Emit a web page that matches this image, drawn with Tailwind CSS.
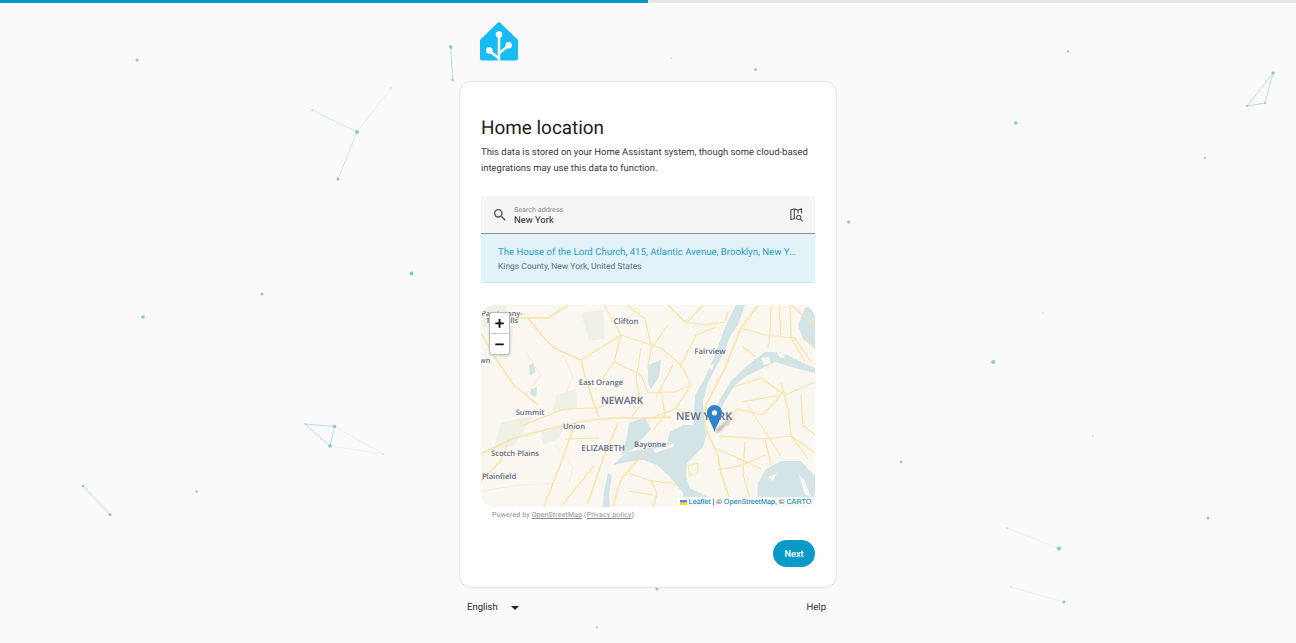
<!DOCTYPE html>
<html lang="en">
<head>
  <meta charset="UTF-8">
  <meta name="viewport" content="width=device-width, initial-scale=1.0">
  <title>Home location</title>
  <script src="https://cdn.jsdelivr.net/npm/@tailwindcss/browser@4"></script>
</head>
<body class="bg-[#fafafa] font-['Roboto',sans-serif] text-[#212121] overflow-hidden [text-rendering:geometricPrecision]">
  <div class="relative h-[643px] w-[1296px] overflow-hidden">

    <!-- background particles -->
    <svg class="absolute inset-0" width="1296" height="643" viewBox="0 0 1296 643">
      <g class="stroke-[#7fc4d4]" stroke-width="0.7" fill="none">
        <path opacity=".55" d="M312 110L357 132"/>
        <path opacity=".25" d="M357 132L391 88"/>
        <path opacity=".5" d="M357 132L338 179"/>
        <path opacity=".8" d="M305 424L334.5 426.5M305 424L330 446M334.5 426.5L330 446"/>
        <path opacity=".2" d="M334.5 426.5L383 454M330 446L383 454"/>
        <path opacity=".8" d="M83 486L110 514.5"/>
        <path opacity=".8" d="M450.7 47L452.7 80"/>
        <path opacity=".8" d="M1273 73L1247 106L1265 103Z"/>
        <path opacity=".2" d="M1007 528L1059 548.5M1011 587L1064 602"/>
      </g>
      <g class="fill-[#86c6d6]">
        <circle cx="137" cy="60" r="1.5"/><circle cx="357" cy="132" r="2"/><circle cx="312" cy="110" r=".7"/>
        <circle cx="391" cy="88" r=".6"/><circle cx="338" cy="179" r="1.6"/><circle cx="411.5" cy="273.5" r="2"/>
        <circle cx="262" cy="294" r="1.5"/><circle cx="143" cy="317" r="1.8"/><circle cx="305" cy="424" r=".7"/>
        <circle cx="334.5" cy="426.5" r="1.7"/><circle cx="330" cy="446" r="1.7"/><circle cx="383" cy="454" r=".6"/>
        <circle cx="83" cy="486" r="1.2"/><circle cx="110" cy="514.5" r="1.6"/><circle cx="196.5" cy="491.5" r="1.2"/>
        <circle cx="450.7" cy="47" r="1.8"/><circle cx="452.7" cy="80" r="1.2"/><circle cx="671" cy="58" r=".6"/>
        <circle cx="755.5" cy="69.7" r="1.4"/><circle cx="1068" cy="51.4" r="1.1"/><circle cx="1273" cy="73" r="1.6"/>
        <circle cx="1247" cy="106" r="1"/><circle cx="1265" cy="103" r="1"/><circle cx="1015.7" cy="123" r="1.8"/>
        <circle cx="1205" cy="158" r="1.1"/><circle cx="848.7" cy="222" r="1.5"/><circle cx="1043" cy="313" r=".6"/>
        <circle cx="993.3" cy="362" r="2.1"/><circle cx="1093" cy="436" r=".7"/><circle cx="901" cy="462" r="1.2"/>
        <circle cx="1208" cy="518" r="1.5"/><circle cx="1007" cy="528" r=".6"/><circle cx="1059" cy="548.5" r="2"/>
        <circle cx="1011" cy="587" r=".6"/><circle cx="1064" cy="602" r="1.5"/><circle cx="657" cy="589" r="1.5"/>
        <circle cx="597" cy="627.5" r=".9"/>
      </g>
    </svg>

    <!-- progress -->
    <div class="relative h-[3px] bg-[#e6e6e6]">
      <div class="h-full w-1/2 bg-[#0a97c6]"></div>
    </div>

    <div class="relative mx-auto w-[378px]">
      <!-- logo -->
      <svg class="ml-[20px] mt-[19px] block" width="40" height="39" viewBox="0 0 40 39">
        <path fill="#18bcf2" d="M19 0.5a1.4 1.4 0 0 1 1.9 0L38.6 17.4a1.6 1.6 0 0 1 .4 1.1V36.600a2 2 0 0 1-2 2H3a2 2 0 0 1-2-2V18.500a1.6 1.6 0 0 1 .4-1.100Z"/>
        <g stroke="#fff" stroke-width="2.500" fill="none" stroke-linecap="butt">
          <path d="M20 13V38.600"/>
          <path d="M29.500 24L20 31"/>
          <path d="M10.500 29L20 36.500"/>
        </g>
        <g fill="#fff">
          <circle cx="20" cy="12.500" r="3.200"/>
          <circle cx="29.700" cy="23.300" r="3.200"/>
          <circle cx="10.300" cy="28.500" r="3.200"/>
        </g>
      </svg>

      <!-- card -->
      <div class="mt-[20px] rounded-xl border border-[#e2e2e2] bg-white px-[21px] pt-[34px] pb-[20px]">
        <h1 class="text-[18.9px] leading-[24px] font-normal text-[#1c1c1c]">Home location</h1>
        <p class="mt-[5px] text-[9.45px] leading-[15.5px] text-[#3a3a3a]">This data is stored on your Home Assistant system, though some cloud-based integrations may use this data to function.</p>

        <!-- search -->
        <div class="mt-[20px] flex h-[38px] items-center rounded-t-[2px] border-b border-[#8e8e8e] bg-[#f5f5f5] pl-[11px] pr-[11px]">
          <svg width="16" height="16" viewBox="0 0 24 24" class="fill-[#555]"><path d="M9.5,3A6.5,6.5 0 0,1 16,9.5C16,11.11 15.41,12.59 14.44,13.73L14.71,14H15.5L20.5,19L19,20.5L14,15.5V14.71L13.73,14.44C12.59,15.41 11.11,16 9.5,16A6.5,6.5 0 0,1 3,9.5A6.5,6.5 0 0,1 9.5,3M9.5,5C7,5 5,7 5,9.5C5,12 7,14 9.5,14C12,14 14,12 14,9.5C14,7 12,5 9.5,5Z"/></svg>
          <div class="ml-[6px] flex-1 pt-[2px]">
            <div class="text-[7.16px] leading-[9px] text-[#8a8a8a]">Search address</div>
            <div class="text-[9.4px] leading-[13px] text-[#262626]">New York</div>
          </div>
          <svg width="15" height="15" viewBox="0 0 24 24" fill="none" class="stroke-[#555]" stroke-width="1.800"><path d="M10 19L8.500 18.500L3 20V4.500L8.500 3L14.500 5L20 3V10.500"/><path d="M8.500 3V18.500M14.500 5V10.500"/><circle cx="15.500" cy="16.500" r="3.400"/><path d="M18 19L22 23"/></svg>
        </div>

        <!-- result -->
        <div class="h-[49px] rounded-b-[2px] border-b border-[#d3e3ea] bg-[#e1f2f9] pl-[17px] pr-[17px] pt-[12px]">
          <div class="truncate text-[9.6px] leading-[13px] text-[#2a9dc6]">The House of the Lord Church, 415, Atlantic Avenue, Brooklyn, New York, United States of America</div>
          <div class="mt-[1.5px] text-[8.5px] leading-[12px] text-[#5d6f7a]">Kings County, New York, United States</div>
        </div>

        <!-- map -->
        <div class="relative mt-[22px] h-[202px] w-[334px] overflow-hidden rounded-[14px] bg-[#faf7f0]">
          <svg width="334" height="202" viewBox="0 0 334 202" class="block">
            <g class="blur-[0.35px]">
              <!-- parks -->
              <g fill="#f0f1e5">
                <path d="M18 18L32 22L30 50L18 52Z"/>
                <path d="M75 90L95 84L96 104L72 108Z"/>
                <path d="M100 8L122 4L124 34L108 36Z"/>
                <path d="M20 118L52 110L34 140L12 146Z"/>
                <path d="M0 0H24L30 12L8 24L0 20Z"/>
                <path d="M60 128L84 120L78 134L62 140Z"/>
              </g>
              <!-- water -->
              <g fill="#d3e4e6">
                <path d="M255 0H264L257 20L250 30L240 53L227 77L222 97L224 122L212 122L214 90L224 73L235 47L245 20Z"/>
                <path d="M189 127L202 120L222 120L226 128L222 142L212 152L206 158L205 172L209 183L227 192L231 202H202V188L189 172L176 160L162 155L146 157L132 160L146 147L169 143L186 138Z"/>
                <path d="M277 178L285 164L300 156L320 156L334 171V202H276Z"/>
                <path d="M267 60L284 47L300 47L320 57L334 63V68L317 64L294 57L280 64L267 70L254 80L244 96L236 112L232 112L238 96L250 76Z"/>
                <path d="M317 20L324 3L334 0V44L322 34Z"/>
                <path d="M148 118L164 112L170 124L152 144L140 150L146 132Z"/>
                <path d="M127 168L131 170L128 190L129 202H122L123 186Z"/>
                <path d="M167 60L180 55L178 72L170 84L167 78Z"/>
                <path d="M48 60L53 58L54 68L49 70Z"/>
                <path d="M50 84L56 82L55 92L49 90Z"/>
              </g>
              <g fill="#faf7f0">
                <path d="M280 53L288 52L290 58L283 60Z"/>
                <path d="M296 47L304 48L303 53L298 52Z"/>
                <path d="M287 172L296 168L292 176Z"/>
                <path d="M318 170L324 176L330 192L324 190Z"/>
                <path d="M172 144L194 138L192 142L174 148Z"/>
                <path d="M228 62L233 58L231 66Z"/>
              </g>
              <!-- roads -->
              <g fill="none" stroke="#fbe3a6" stroke-width="1.200" stroke-linejoin="round">
                <path stroke-width="1.500" d="M47 13L63 33L73 43L100 55L103 67L110 90L118 112"/>
                <path stroke-width="1.500" d="M0 28L17 57L33 80L57 100"/>
                <path stroke-width="1.500" d="M30 13L67 13L87 0"/>
                <path d="M100 55L140 30L170 40L180 43L200 60L210 80L194 104"/>
                <path d="M123 0L140 30L133 57L117 80"/>
                <path d="M160 43L155 73L160 100L150 113"/>
                <path d="M187 0L204 17L224 20L244 17L247 7"/>
                <path stroke-width="1.600" d="M277 0L260 23L244 63L225 100L224 121L237 151L240 168L250 198"/>
                <path d="M260 23L284 30L314 33L330 57"/>
                <path d="M290 0L289 30L287 43"/>
                <path d="M309 0L310 33L324 57"/>
                <path d="M250 83L280 73L304 90L334 77"/>
                <path d="M300 77L307 104L310 131L327 154"/>
                <path d="M260 97L300 90"/>
                <path d="M167 88L194 87L210 80"/>
                <path d="M187 20L170 44L167 62"/>
                <path d="M205 18L222 0"/>
                <path stroke-width="1.700" d="M0 149L30 134L67 124L103 116L133 113L170 113L190 112"/>
                <path d="M40 121L83 104L117 103L140 92"/>
                <path stroke-width="1.500" d="M92 124L80 158L63 201"/>
                <path stroke-width="1.500" d="M137 118L123 151L107 198"/>
                <path stroke-width="1.500" d="M163 148L140 174L132 201"/>
                <path d="M113 161L80 201"/>
                <path d="M147 168L170 176L190 178L199 181"/>
                <path d="M207 161L217 158L217 168L209 171Z"/>
                <path d="M237 131L284 134L310 131L334 148"/>
                <path d="M267 101L287 131L300 151"/>
                <path d="M237 144L280 164"/>
                <path d="M84 134L118 133"/>
                <path d="M0 176L20 156L26 140"/>
                <path d="M170 113L194 104L214 112"/>
                <path d="M146 0L164 14L170 40"/>
                <path d="M134 57L160 70L167 88"/>
                <path d="M264 136L262 170L270 196"/>
                <path d="M284 134L290 160"/>
                <path d="M310 0L334 20"/>
                <path d="M200 60L215 30L235 22"/>
                <path d="M180 85L184 110L172 125"/>
                <path d="M192 60L175 92"/>
                <path d="M246 121L256 104L282 110L300 90"/>
                <path d="M320 90L322 120L334 130"/>
                <path d="M262 42L275 52"/>
                <path d="M237 165L262 160L284 150"/>
                <path d="M300 30L298 0M326 33L334 44"/>
                <path d="M170 176L176 188L172 202"/>
                <path d="M148 186L172 190"/>
              </g>
              <g fill="none" stroke="#ece7da" stroke-width=".600">
                <path d="M0 186L40 180L80 178"/>
                <path d="M44 46L60 70L46 88"/>
                <path d="M74 140L92 162L88 178"/>
                <path d="M254 150L270 180L264 192"/>
                <path d="M82 50L92 72L84 90"/>
              </g>
            </g>
            <!-- place labels -->
            <g class="font-['Open_Sans',sans-serif] fill-[#5f6d87]" font-weight="600" text-anchor="middle">
              <text x="21" y="11" font-size="7.200">Parsippany-</text>
              <text x="21" y="18" font-size="7.200">Troy Hills</text>
              <text x="4" y="58" font-size="7.200">wn</text>
              <text x="145" y="19" font-size="7.800">Clifton</text>
              <text x="229" y="49" font-size="7.800">Fairview</text>
              <text x="120" y="80" font-size="7.600">East Orange</text>
              <text x="141" y="99" font-size="10">NEWARK</text>
              <text x="49" y="110" font-size="7.600">Summit</text>
              <text x="93" y="124" font-size="7.600">Union</text>
              <text x="122" y="146" font-size="8.400">ELIZABETH</text>
              <text x="169" y="142" font-size="7.600">Bayonne</text>
              <text x="34" y="151" font-size="7.600">Scotch Plains</text>
              <text x="18" y="174" font-size="7.600">Plainfield</text>
              <text x="223" y="115" font-size="10.800">NEW YORK</text>
            </g>
            <!-- marker -->
            <path class="blur-[1.5px]" fill="#000" opacity=".35" d="M234 126.500L250 112L248 116L238 127Z"/>
            <path fill="#2f83c6" d="M233.500 100C229.300 100 226 103.300 226 107.500C226 112.500 231.500 120 233.500 127C235.500 120 241 112.500 241 107.500C241 103.300 237.700 100 233.500 100Z"/>
            <circle cx="233.500" cy="107.800" r="2.600" fill="#fff"/>
          </svg>

          <!-- zoom buttons -->
          <div class="absolute left-[8px] top-[7px] w-[21px] rounded-[3px] border border-[#bdbdbd] bg-white text-center font-['Liberation_Sans',sans-serif] text-[#111] shadow-sm">
            <div class="h-[21px] border-b border-[#ccc] text-[17px] leading-[22px] font-bold">+</div>
            <div class="h-[20px] text-[17px] leading-[21px] font-bold">−</div>
          </div>

          <!-- attribution -->
          <div class="absolute bottom-0 right-0 flex h-[10px] items-center bg-white/80 pl-[3px] pr-[3.5px] font-['Liberation_Sans',sans-serif] text-[7.25px] leading-[10px] text-[#333]">
            <svg width="7" height="5" viewBox="0 0 12 8" class="mr-[2px]"><rect width="12" height="4" fill="#4c7be1"/><rect y="4" width="12" height="4" fill="#ffd500"/></svg>
            <span class="text-[#0078a8]">Leaflet</span><span>&nbsp;| ©&nbsp;</span><span class="text-[#0078a8]">OpenStreetMap</span><span>, ©&nbsp;</span><span class="text-[#0078a8]">CARTO</span>
          </div>
        </div>

        <p class="mt-[3px] pl-[11px] text-[7px] leading-[10px] tracking-[0.15px] text-[#8b8b8b]">Powered by <span class="underline">OpenStreetMap</span> (<span class="underline">Privacy policy</span>).</p>

        <div class="mt-[20px] flex justify-end">
          <button class="h-[27px] w-[42px] rounded-full bg-[#0a9ac7] text-[9.2px] font-medium text-white">Next</button>
        </div>
      </div>

      <!-- footer -->
      <div class="mt-[10px] flex h-[20px] items-center justify-between pl-[8px] pr-[11px] text-[9.5px] text-[#2b2b2b]">
        <div class="flex items-center">
          <span>English</span>
          <span class="ml-[13px] h-0 w-0 border-x-[4px] border-t-[4px] border-x-transparent border-t-[#222]"></span>
        </div>
        <span>Help</span>
      </div>
    </div>
  </div>
</body>
</html>
